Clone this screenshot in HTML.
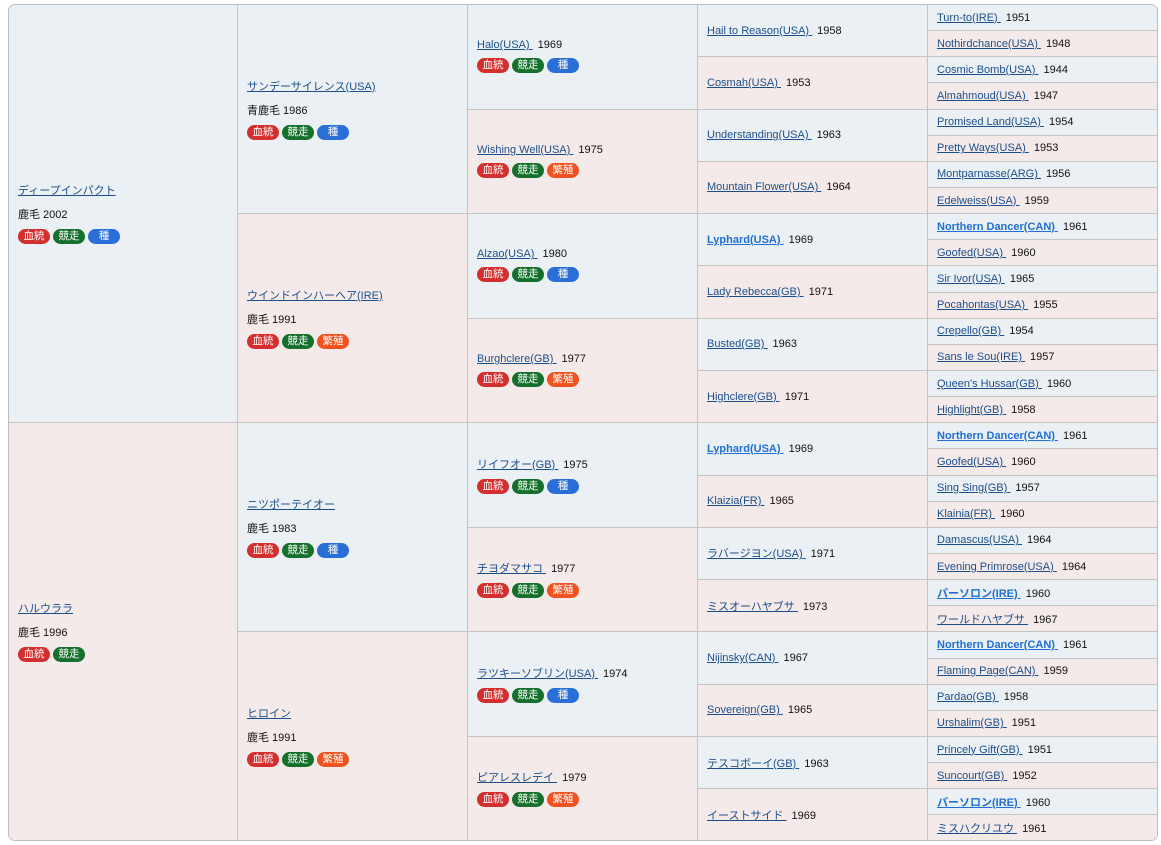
<!DOCTYPE html>
<html><head><meta charset="utf-8"><style>
*{box-sizing:border-box}
body{margin:0;background:#fff;font-family:"Liberation Sans","Noto Sans CJK JP",sans-serif;font-size:11px;color:#111}
.wrap{position:absolute;left:8px;top:4px;width:1150px;height:837px;border:1px solid #bdbdbd;border-radius:7px;overflow:hidden}
table{border-collapse:collapse;table-layout:fixed;width:1150px;height:837px;margin:-1px}
td{border:1px solid #c4c4c4;padding:0 0 0 9px;vertical-align:middle;white-space:nowrap;overflow:hidden}
tr{height:26.15px}
.m{background:#ebf0f5}.f{background:#f5eaea}
a{color:#1c4f8a;text-decoration:underline}
a.b{color:#1f6fd4;font-weight:bold}
.y{margin-left:5px}
.c{margin-top:8px}
.bd{margin-top:7px;height:16px}
.bd span{display:inline-block;width:32px;height:15px;line-height:15px;border-radius:8px;color:#fff;font-size:10.5px;text-align:center;margin-right:3px;vertical-align:top}
.r{background:#d32f2f}.g{background:#14702a}.u{background:#2a6fd8}.o{background:#f0531f}
.n3 .bd{margin-top:7px}
</style></head><body><div class="wrap"><table>
<colgroup><col style="width:229px"><col style="width:230px"><col style="width:230px"><col style="width:230px"><col style="width:231px"></colgroup>
<tr>
<td class="m" rowspan="16"><div><a>ディープインパクト</a></div><div class="c">鹿毛 2002</div><div class="bd"><span class="r">血統</span><span class="g">競走</span><span class="u">種</span></div></td>
<td class="m" rowspan="8"><div><a>サンデーサイレンス(USA)</a></div><div class="c">青鹿毛 1986</div><div class="bd"><span class="r">血統</span><span class="g">競走</span><span class="u">種</span></div></td>
<td class="m n3" rowspan="4"><div><a>Halo(USA)&nbsp;</a><span class="y">1969</span></div><div class="bd"><span class="r">血統</span><span class="g">競走</span><span class="u">種</span></div></td>
<td class="m" rowspan="2"><a>Hail to Reason(USA)&nbsp;</a><span class="y">1958</span></td>
<td class="m"><a>Turn-to(IRE)&nbsp;</a><span class="y">1951</span></td></tr>
<tr><td class="f"><a>Nothirdchance(USA)&nbsp;</a><span class="y">1948</span></td></tr>
<tr><td class="f" rowspan="2"><a>Cosmah(USA)&nbsp;</a><span class="y">1953</span></td><td class="m"><a>Cosmic Bomb(USA)&nbsp;</a><span class="y">1944</span></td></tr>
<tr><td class="f"><a>Almahmoud(USA)&nbsp;</a><span class="y">1947</span></td></tr>
<tr><td class="f n3" rowspan="4"><div><a>Wishing Well(USA)&nbsp;</a><span class="y">1975</span></div><div class="bd"><span class="r">血統</span><span class="g">競走</span><span class="o">繁殖</span></div></td>
<td class="m" rowspan="2"><a>Understanding(USA)&nbsp;</a><span class="y">1963</span></td><td class="m"><a>Promised Land(USA)&nbsp;</a><span class="y">1954</span></td></tr>
<tr><td class="f"><a>Pretty Ways(USA)&nbsp;</a><span class="y">1953</span></td></tr>
<tr><td class="f" rowspan="2"><a>Mountain Flower(USA)&nbsp;</a><span class="y">1964</span></td><td class="m"><a>Montparnasse(ARG)&nbsp;</a><span class="y">1956</span></td></tr>
<tr><td class="f"><a>Edelweiss(USA)&nbsp;</a><span class="y">1959</span></td></tr>
<tr><td class="f" rowspan="8"><div><a>ウインドインハーヘア(IRE)</a></div><div class="c">鹿毛 1991</div><div class="bd"><span class="r">血統</span><span class="g">競走</span><span class="o">繁殖</span></div></td>
<td class="m n3" rowspan="4"><div><a>Alzao(USA)&nbsp;</a><span class="y">1980</span></div><div class="bd"><span class="r">血統</span><span class="g">競走</span><span class="u">種</span></div></td>
<td class="m" rowspan="2"><a class="b">Lyphard(USA)&nbsp;</a><span class="y">1969</span></td><td class="m"><a class="b">Northern Dancer(CAN)&nbsp;</a><span class="y">1961</span></td></tr>
<tr><td class="f"><a>Goofed(USA)&nbsp;</a><span class="y">1960</span></td></tr>
<tr><td class="f" rowspan="2"><a>Lady Rebecca(GB)&nbsp;</a><span class="y">1971</span></td><td class="m"><a>Sir Ivor(USA)&nbsp;</a><span class="y">1965</span></td></tr>
<tr><td class="f"><a>Pocahontas(USA)&nbsp;</a><span class="y">1955</span></td></tr>
<tr><td class="f n3" rowspan="4"><div><a>Burghclere(GB)&nbsp;</a><span class="y">1977</span></div><div class="bd"><span class="r">血統</span><span class="g">競走</span><span class="o">繁殖</span></div></td>
<td class="m" rowspan="2"><a>Busted(GB)&nbsp;</a><span class="y">1963</span></td><td class="m"><a>Crepello(GB)&nbsp;</a><span class="y">1954</span></td></tr>
<tr><td class="f"><a>Sans le Sou(IRE)&nbsp;</a><span class="y">1957</span></td></tr>
<tr><td class="f" rowspan="2"><a>Highclere(GB)&nbsp;</a><span class="y">1971</span></td><td class="m"><a>Queen's Hussar(GB)&nbsp;</a><span class="y">1960</span></td></tr>
<tr><td class="f"><a>Highlight(GB)&nbsp;</a><span class="y">1958</span></td></tr>
<tr>
<td class="f" rowspan="16"><div><a>ハルウララ</a></div><div class="c">鹿毛 1996</div><div class="bd"><span class="r">血統</span><span class="g">競走</span></div></td>
<td class="m" rowspan="8"><div><a>ニツポーテイオー</a></div><div class="c">鹿毛 1983</div><div class="bd"><span class="r">血統</span><span class="g">競走</span><span class="u">種</span></div></td>
<td class="m n3" rowspan="4"><div><a>リイフオー(GB)&nbsp;</a><span class="y">1975</span></div><div class="bd"><span class="r">血統</span><span class="g">競走</span><span class="u">種</span></div></td>
<td class="m" rowspan="2"><a class="b">Lyphard(USA)&nbsp;</a><span class="y">1969</span></td><td class="m"><a class="b">Northern Dancer(CAN)&nbsp;</a><span class="y">1961</span></td></tr>
<tr><td class="f"><a>Goofed(USA)&nbsp;</a><span class="y">1960</span></td></tr>
<tr><td class="f" rowspan="2"><a>Klaizia(FR)&nbsp;</a><span class="y">1965</span></td><td class="m"><a>Sing Sing(GB)&nbsp;</a><span class="y">1957</span></td></tr>
<tr><td class="f"><a>Klainia(FR)&nbsp;</a><span class="y">1960</span></td></tr>
<tr><td class="f n3" rowspan="4"><div><a>チヨダマサコ&nbsp;</a><span class="y">1977</span></div><div class="bd"><span class="r">血統</span><span class="g">競走</span><span class="o">繁殖</span></div></td>
<td class="m" rowspan="2"><a>ラバージヨン(USA)&nbsp;</a><span class="y">1971</span></td><td class="m"><a>Damascus(USA)&nbsp;</a><span class="y">1964</span></td></tr>
<tr><td class="f"><a>Evening Primrose(USA)&nbsp;</a><span class="y">1964</span></td></tr>
<tr><td class="f" rowspan="2"><a>ミスオーハヤブサ&nbsp;</a><span class="y">1973</span></td><td class="m"><a class="b">パーソロン(IRE)&nbsp;</a><span class="y">1960</span></td></tr>
<tr><td class="f"><a>ワールドハヤブサ&nbsp;</a><span class="y">1967</span></td></tr>
<tr><td class="f" rowspan="8"><div><a>ヒロイン</a></div><div class="c">鹿毛 1991</div><div class="bd"><span class="r">血統</span><span class="g">競走</span><span class="o">繁殖</span></div></td>
<td class="m n3" rowspan="4"><div><a>ラツキーソブリン(USA)&nbsp;</a><span class="y">1974</span></div><div class="bd"><span class="r">血統</span><span class="g">競走</span><span class="u">種</span></div></td>
<td class="m" rowspan="2"><a>Nijinsky(CAN)&nbsp;</a><span class="y">1967</span></td><td class="m"><a class="b">Northern Dancer(CAN)&nbsp;</a><span class="y">1961</span></td></tr>
<tr><td class="f"><a>Flaming Page(CAN)&nbsp;</a><span class="y">1959</span></td></tr>
<tr><td class="f" rowspan="2"><a>Sovereign(GB)&nbsp;</a><span class="y">1965</span></td><td class="m"><a>Pardao(GB)&nbsp;</a><span class="y">1958</span></td></tr>
<tr><td class="f"><a>Urshalim(GB)&nbsp;</a><span class="y">1951</span></td></tr>
<tr><td class="f n3" rowspan="4"><div><a>ピアレスレデイ&nbsp;</a><span class="y">1979</span></div><div class="bd"><span class="r">血統</span><span class="g">競走</span><span class="o">繁殖</span></div></td>
<td class="m" rowspan="2"><a>テスコボーイ(GB)&nbsp;</a><span class="y">1963</span></td><td class="m"><a>Princely Gift(GB)&nbsp;</a><span class="y">1951</span></td></tr>
<tr><td class="f"><a>Suncourt(GB)&nbsp;</a><span class="y">1952</span></td></tr>
<tr><td class="f" rowspan="2"><a>イーストサイド&nbsp;</a><span class="y">1969</span></td><td class="m"><a class="b">パーソロン(IRE)&nbsp;</a><span class="y">1960</span></td></tr>
<tr><td class="f"><a>ミスハクリユウ&nbsp;</a><span class="y">1961</span></td></tr>
</table></div></body></html>
